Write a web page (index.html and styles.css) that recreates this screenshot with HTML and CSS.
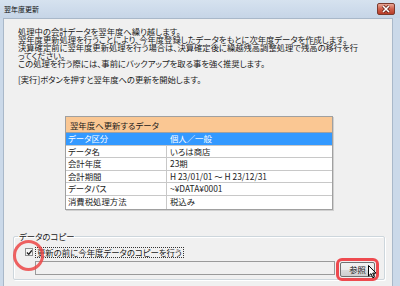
FILE: index.html
```html
<!DOCTYPE html>
<html lang="ja">
<head>
<meta charset="utf-8">
<link rel="stylesheet" href="styles.css">
</head>
<body>
<div class="window">
  <div class="titlebar">
    <span class="title">翌年度更新</span>
    <span class="close"><svg width="10" height="8" viewBox="0 0 10 8"><path d="M2 1 L8 7 M8 1 L2 7" stroke="#5a1a12" stroke-width="3"/><path d="M2 1 L8 7 M8 1 L2 7" stroke="#fff" stroke-width="1.6"/></svg></span>
  </div>
  <div class="frame">
    <div class="client">
      <div class="intro">
        <p class="line">処理中の会計データを翌年度へ繰り越します。</p>
        <p class="line">翌年度更新処理を行うことにより、今年度登録したデータをもとに次年度データを作成します。</p>
        <p class="line">決算確定前に翌年度更新処理を行う場合は、決算確定後に繰越残高調整処理で残高の移行を行</p>
        <p class="line">ってください。</p>
        <p class="line">この処理を行う際には、事前にバックアップを取る事を強く推奨します。</p>
        <p class="line gap">[実行]ボタンを押すと翌年度への更新を開始します。</p>
      </div>
      <div class="grid">
        <div class="ghead">翌年度へ更新するデータ</div>
        <div class="row sel"><span class="c1">データ区分</span><span class="c2">個人／一般</span></div>
        <div class="row"><span class="c1">データ名</span><span class="c2">いろは商店</span></div>
        <div class="row"><span class="c1">会計年度</span><span class="c2">23期</span></div>
        <div class="row"><span class="c1">会計期間</span><span class="c2">H 23/01/01 ～ H 23/12/31</span></div>
        <div class="row"><span class="c1">データパス</span><span class="c2">~¥DATA¥0001</span></div>
        <div class="row"><span class="c1">消費税処理方法</span><span class="c2">税込み</span></div>
      </div>
      <fieldset class="group">
        <legend>データのコピー</legend>
        <div class="checkrow">
          <span class="checkbox"><svg width="7" height="7" viewBox="0 0 7 7"><path d="M1 3.5 L3 5.5 L6.2 1.2" stroke="#1a1a1a" stroke-width="1.4" fill="none"/></svg></span>
          <span class="checklabel">更新の前に今年度データのコピーを行う</span>
        </div>
        <div class="pathrow">
          <span class="textbox"></span>
          <span class="button">参照</span>
        </div>
      </fieldset>
    </div>
  </div>
  <span class="circle"></span>
  <svg class="cursor" width="9" height="14" viewBox="0 0 9 14"><path d="M0.5 0.5 L0.5 11 L3 8.6 L4.8 12.8 L6.4 12.1 L4.7 8.1 L8 8.1 Z" fill="#fff" stroke="#000" stroke-width="1"/></svg>
</div>
</body>
</html>
```
FILE: styles.css
```css
* { box-sizing: border-box; }
html, body { margin: 0; padding: 0; }
body {
  width: 400px;
  height: 286px;
  overflow: hidden;
  font-family: "Noto Sans CJK JP", "Noto Sans", sans-serif;
  font-feature-settings: "palt";
  color: #1a1a1a;
}
.window {
  position: relative;
  width: 400px;
  height: 286px;
  background: #cbd9e9;
  display: flex;
  flex-direction: column;
  overflow: hidden;
}
.titlebar {
  height: 18px;
  flex: none;
  display: flex;
  align-items: flex-start;
  background: linear-gradient(#d6e2ef, #c6d5e7);
}
.title {
  font-size: 7px;
  line-height: 8px;
  margin: 5px 0 0 4px;
  color: #111;
}
.close {
  margin: 3px 5px 0 auto;
  width: 18px;
  height: 12px;
  border: 1px solid #7a3a2e;
  border-radius: 2px;
  background: linear-gradient(#e8a898, #d0604c 50%, #b83c28);
  display: flex;
  align-items: center;
  justify-content: center;
}
.frame {
  flex: 1;
  display: flex;
  padding: 0 7px 0 3px;
}
.client {
  flex: 1;
  background: #f0f0f0;
  border-left: 1px solid #a9b8c9;
  border-right: 1px solid #a9b8c9;
  border-top: 1px solid #a9b8c9;
  display: flex;
  flex-direction: column;
}
.intro {
  padding: 8px 0 0 14px;
}
.line {
  margin: 0;
  font-size: 8.3px;
  line-height: 8px;
  white-space: nowrap;
}
.gap { margin-top: 8px; }
.grid {
  margin: 33px 0 0 61px;
  width: 268px;
  border: 1px solid #a0a0a0;
  box-shadow: 1px 1px 0 #d0d0d0;
  background: #fff;
  font-size: 8.4px;
}
.ghead {
  height: 16px;
  line-height: 16px;
  background: #fac793;
  padding-left: 4px;
  border-bottom: 1px solid #a0a0a0;
}
.row {
  display: flex;
  height: 12.6px;
  line-height: 11.6px;
  border-bottom: 1px solid #c8c8c8;
}
.row:last-child { border-bottom: none; }
.c1 {
  width: 101px;
  flex: none;
  padding-left: 2px;
  border-right: 1px solid #c8c8c8;
}
.c2 { padding-left: 3px; }
.sel { background: #3399ff; color: #fff; }
.sel .c1 { border-right-color: #3399ff; }
.group {
  margin: 22px 0 0 9px;
  width: 372px;
  height: 48px;
  padding: 0;
  border: 1px solid #cdd6dc;
  border-radius: 2px;
  box-shadow: inset 1px 1px 0 #fff, 1px 1px 0 #fff;
}
.group legend {
  font-size: 8.4px;
  line-height: 9px;
  margin-left: 4px;
  padding: 0 1px;
}
.checkrow {
  display: flex;
  align-items: center;
  margin: 6px 0 0 11px;
  height: 11px;
}
.checkbox {
  width: 8px;
  height: 8px;
  border: 1px solid #8e8f8f;
  background: #f6f6f6;
  display: flex;
}
.checkbox svg { margin: -0.5px 0 0 -0.5px; }
.checklabel {
  margin-left: 2px;
  font-size: 8.4px;
  line-height: 9px;
  padding: 0 1px;
  border: 1px dotted #333;
}
.pathrow {
  display: flex;
  align-items: flex-start;
  margin: 3px 0 0 21px;
}
.textbox {
  width: 300px;
  height: 14px;
  border: 1px solid #9a9a9a;
  background: #f0f0f0;
}
.button {
  margin: 1px 0 0 5px;
  width: 35px;
  height: 15px;
  border: 1px solid #707070;
  border-radius: 2px;
  background: linear-gradient(#f2f2f2, #ebebeb 50%, #dddddd 51%, #cfcfcf);
  font-size: 8.4px;
  line-height: 13px;
  text-align: center;
  outline: 3px solid #ee4a4f;
  outline-offset: 1px;
}
.circle {
  position: absolute;
  left: 13px;
  top: 240px;
  width: 31px;
  height: 31px;
  border: 3px solid rgba(236, 70, 70, 0.85);
  border-radius: 50%;
}
.cursor {
  position: absolute;
  left: 368px;
  top: 265px;
}
```
